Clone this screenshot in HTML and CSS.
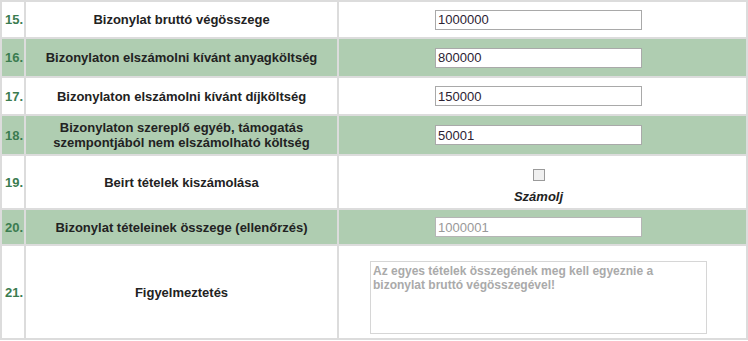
FILE: index.html
```html
<!DOCTYPE html>
<html lang="hu">
<head>
  <meta charset="UTF-8" />
  <title>Bizonylat adatai</title>
  <link rel="stylesheet" href="styles.css">
</head>
<body>
  <table class="adatok">
    <tr class="h35">
      <td class="szam">15.</td>
      <td class="cimke">Bizonylat bruttó végösszege</td>
      <td class="ertek"><input type="text" value="1000000"></td>
    </tr>
    <tr class="zold h37">
      <td class="szam">16.</td>
      <td class="cimke">Bizonylaton elszámolni kívánt anyagköltség</td>
      <td class="ertek"><input type="text" value="800000"></td>
    </tr>
    <tr class="h36">
      <td class="szam">17.</td>
      <td class="cimke">Bizonylaton elszámolni kívánt díjköltség</td>
      <td class="ertek"><input type="text" value="150000"></td>
    </tr>
    <tr class="zold h38">
      <td class="szam">18.</td>
      <td class="cimke">Bizonylaton szereplő egyéb, támogatás<br>szempontjából nem elszámolható költség</td>
      <td class="ertek"><input type="text" value="50001"></td>
    </tr>
    <tr class="h52">
      <td class="szam">19.</td>
      <td class="cimke">Beirt tételek kiszámolása</td>
      <td class="ertek">
        <label class="szamolj"><input type="checkbox"><span>Számolj</span></label>
      </td>
    </tr>
    <tr class="zold h34">
      <td class="szam">20.</td>
      <td class="cimke">Bizonylat tételeinek összege (ellenőrzés)</td>
      <td class="ertek"><input type="text" value="1000001" disabled></td>
    </tr>
    <tr class="h92">
      <td class="szam">21.</td>
      <td class="cimke">Figyelmeztetés</td>
      <td class="ertek figy"><textarea readonly>Az egyes tételek összegének meg kell egyeznie a bizonylat bruttó végösszegével!</textarea></td>
    </tr>
  </table>
</body>
</html>
```

FILE: styles.css
```css
body { margin: 0; background: #fff; font-family: "Liberation Sans", Arial, sans-serif; font-size: 13px; }
.adatok { width: 748px; border-collapse: separate; border-spacing: 2px; background: #dcdcdc; }
.adatok td { background: #fff; padding: 0; vertical-align: middle; }
.adatok tr.zold td { background: #afcdb1; }

.h34 td { height: 34px; }
.h35 td { height: 35px; }
.h36 td { height: 36px; }
.h37 td { height: 37px; }
.h38 td { height: 38px; }
.h52 td { height: 52px; }
.h92 td { height: 92px; box-sizing: border-box; }

.szam { width: 19px; padding-left: 3px !important; color: #3b7c50; font-weight: bold; }
.cimke { width: 311px; text-align: center; font-weight: bold; color: #222; line-height: 15px; }
.ertek { text-align: center; padding-right: 8px !important; }
.ertek.figy { padding-top: 10px !important; }

.ertek input[type=text] {
  width: 207px; height: 20px; box-sizing: border-box; margin: 0;
  border: 1px solid #a9a9a9; padding: 0 2px; background: #fff;
  font-family: "Liberation Sans", Arial, sans-serif; font-size: 13px; color: #2b2233;
  display: inline-block; vertical-align: middle;
}
.ertek input[disabled] { color: #999; border-color: #b5b5b5; }

.szamolj { display: inline-flex; flex-direction: column; align-items: center; gap: 8px; padding-top: 8px; }
.szamolj input { width: 12px; height: 12px; margin: 0; appearance: none; border: 1px solid #9a9a9a; background: #f0f0f0; }
.szamolj span { font-weight: bold; font-style: italic; color: #222; font-size: 13px; }

.ertek textarea {
  width: 337px; height: 73px; box-sizing: border-box; margin: 0; resize: none;
  border: 1px solid #d6d6d6; padding: 2px 2px; display: inline-block; vertical-align: middle;
  font-family: "Liberation Sans", Arial, sans-serif; font-size: 12px; font-weight: bold; color: #aaa;
  line-height: 14px; overflow: hidden;
}
```
